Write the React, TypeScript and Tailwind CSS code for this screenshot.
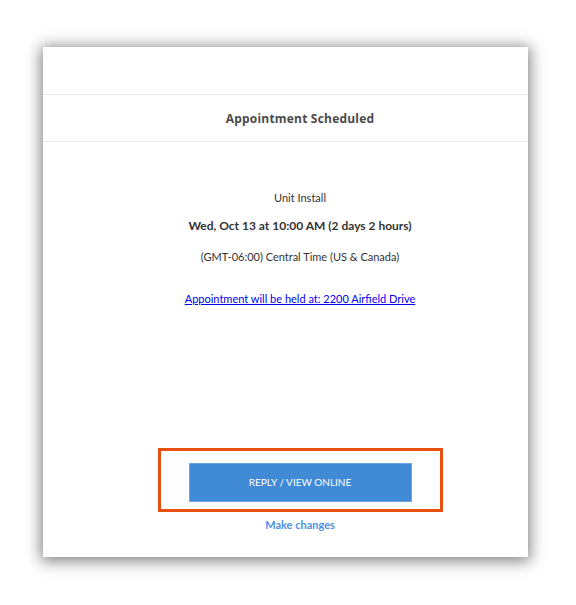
export default function App() {
  return (
    <div className="min-h-[605px] w-[576px] bg-white pl-[43px] pt-[47px]">
      <div className="flex h-[510px] w-[485px] flex-col bg-white shadow-[0_2px_14px_2px_rgba(0,0,0,0.5)]">
        <div className="h-[48px] border-b border-[#e8e8e8]" />
        <div className="flex h-[47px] items-center justify-center border-b border-[#e8e8e8] pl-[29px] pt-[2px] font-['Open_Sans',sans-serif] text-[12px] font-bold tracking-[0.2px] text-[#4a4a4a]">
          Appointment Scheduled
        </div>

        <div className="flex flex-1 flex-col items-center pl-[29px] font-['Lato',sans-serif] text-[#333]">
          <p className="mt-[49px] text-[11px] leading-[14px]">Unit Install</p>
          <p className="mt-[13px] text-[12px] font-bold leading-[16px]">Wed, Oct 13 at 10:00 AM (2 days 2 hours)</p>
          <p className="mt-[16px] text-[11px] leading-[14px]">(GMT-06:00) Central Time (US &amp; Canada)</p>
          <a href="#" className="mt-[28px] text-[11px] leading-[14px] text-[#0000ee] underline">
            Appointment will be held at: 2200 Airfield Drive
          </a>

          <div className="mt-[142px] flex h-[64px] w-[285px] justify-center border-[3px] border-[#e8500f] pt-[12px]">
            <button className="flex h-[39px] w-[223px] items-center justify-center border border-[#6aa5e6] bg-[#418ad6] text-[10px] text-white">
              REPLY / VIEW ONLINE
            </button>
          </div>
          <a href="#" className="mt-[6px] text-[11px] font-bold leading-[14px] text-[#4f8fe8]">
            Make changes
          </a>
        </div>
      </div>
    </div>
  )
}
